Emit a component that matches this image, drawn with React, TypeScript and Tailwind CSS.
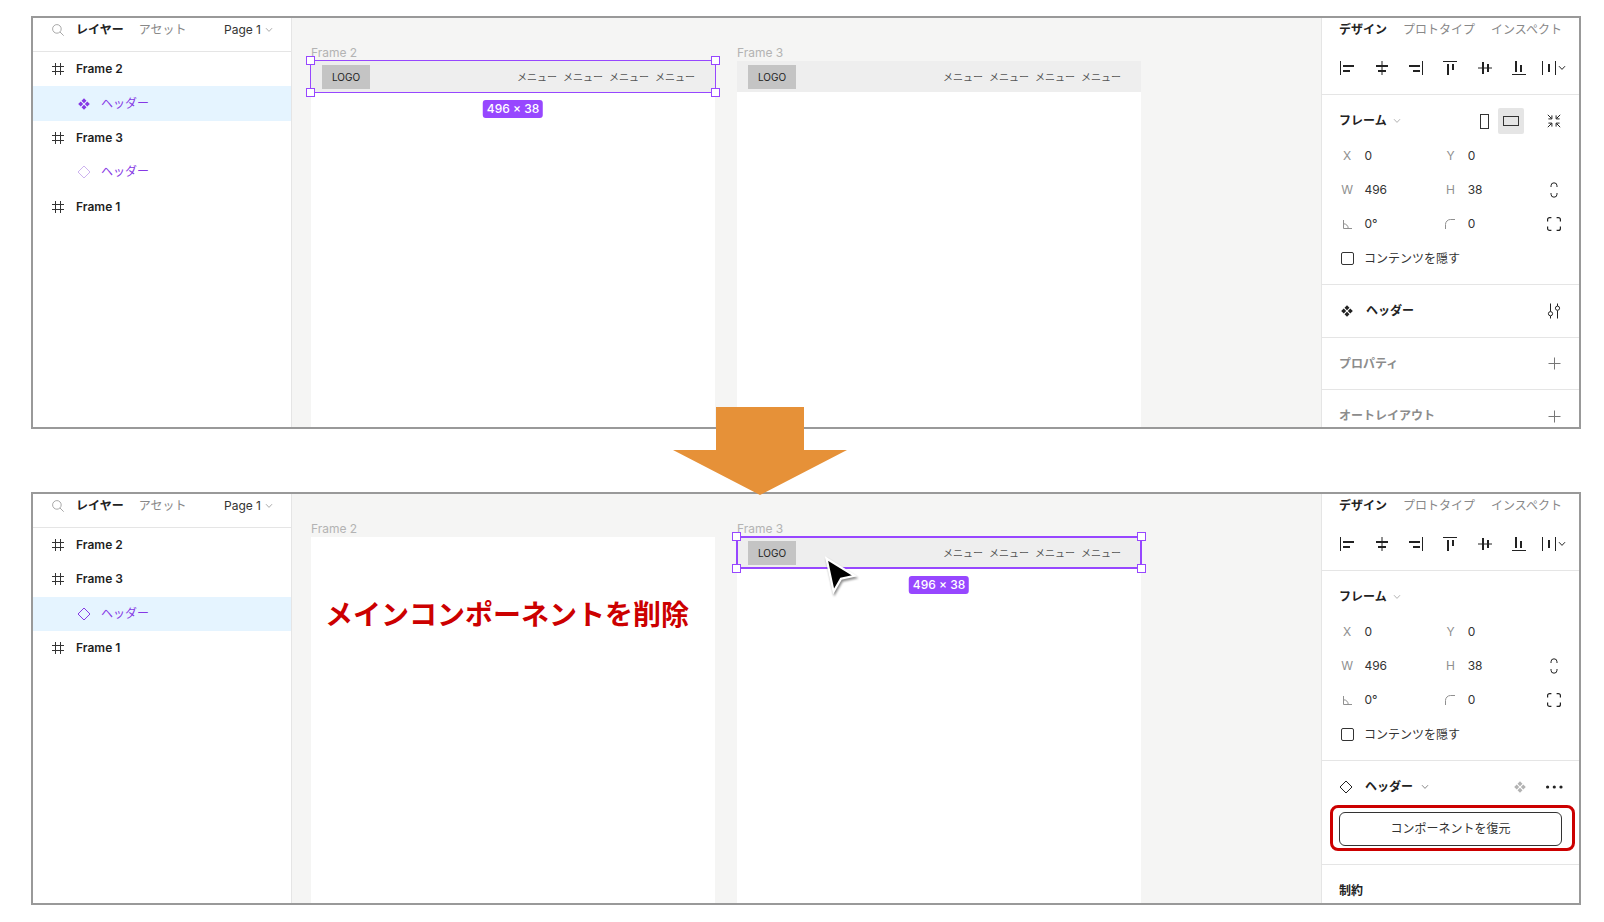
import { useId, type ReactNode } from "react";

const RULE = "border-[#e5e5e5]";

/* ---------- icons ---------- */

function Svg({ w, h, className = "", children }: { w: number; h: number; className?: string; children: ReactNode }) {
  return (
    <svg width={w} height={h} viewBox={`0 0 ${w} ${h}`} fill="none" stroke="currentColor" className={`shrink-0 ${className}`} aria-hidden="true">
      {children}
    </svg>
  );
}

const SearchIcon = () => (
  <Svg w={12} h={12} className="text-[#a8a8a8]">
    <circle cx="4.9" cy="4.9" r="4.3" />
    <path d="M8 8 11.7 11.7" />
  </Svg>
);

const Chevron = ({ className = "" }: { className?: string }) => (
  <Svg w={8} h={6} className={className}>
    <path d="M1 1.2 4 4.4 7 1.2" />
  </Svg>
);

const FrameIcon = () => (
  <Svg w={12} h={12} className="text-[#333]">
    <path d="M3.5 0V12M8.5 0V12M0 3.5H12M0 8.5H12" />
  </Svg>
);

const ComponentIcon = ({ className = "" }: { className?: string }) => (
  <Svg w={12} h={12} className={className}>
    <path fill="currentColor" stroke="none" d="M6 .2 8.5 2.7 6 5.2 3.5 2.7ZM6 6.8 8.5 9.3 6 11.8 3.5 9.3ZM2.7 3.5 5.2 6 2.7 8.5.2 6ZM9.3 3.5 11.8 6 9.3 8.5 6.8 6Z" />
  </Svg>
);

const DiamondIcon = ({ className = "" }: { className?: string }) => (
  <Svg w={14} h={14} className={className}>
    <path d="M7 1 13 7 7 13 1 7Z" />
  </Svg>
);

const PlusIcon = () => (
  <Svg w={13} h={13} className="text-[#777]">
    <path d="M6.5 .5V12.5M.5 6.5H12.5" />
  </Svg>
);

const SlidersIcon = () => (
  <Svg w={14} h={16} className="text-[#222]">
    <path d="M3.5 .5V8.5M3.5 13V15.5M10.5 .5V3M10.5 7.5V15.5" />
    <circle cx="3.5" cy="10.7" r="2.1" />
    <circle cx="10.5" cy="5.2" r="2.1" />
  </Svg>
);

const DotsIcon = () => (
  <Svg w={18} h={4} className="text-[#222]">
    <g fill="currentColor" stroke="none">
      <circle cx="2.6" cy="2" r="1.6" />
      <circle cx="9.3" cy="2" r="1.6" />
      <circle cx="16" cy="2" r="1.6" />
    </g>
  </Svg>
);

const alignIcons: { name: string; icon: ReactNode }[] = [
  { name: "左揃え", icon: <Svg w={14} h={14}><path d="M.5 0V14" /><path strokeWidth="2" d="M3 5H14M3 10H10" /></Svg> },
  { name: "水平方向の中央揃え", icon: <Svg w={14} h={14}><path d="M7 0V14" /><path strokeWidth="2" d="M1 5H13M3 10H11" /></Svg> },
  { name: "右揃え", icon: <Svg w={14} h={14}><path d="M13.5 0V14" /><path strokeWidth="2" d="M0 5H11M4 10H11" /></Svg> },
  { name: "上揃え", icon: <Svg w={14} h={14}><path d="M0 .5H14" /><path strokeWidth="2" d="M5 3V14M10 3V9" /></Svg> },
  { name: "垂直方向の中央揃え", icon: <Svg w={14} h={14}><path d="M0 7H14" /><path strokeWidth="2" d="M5 1V13M10 3V11" /></Svg> },
  { name: "下揃え", icon: <Svg w={14} h={14}><path d="M0 13.5H14" /><path strokeWidth="2" d="M4 0V11M9 4V11" /></Svg> },
  { name: "均等配置", icon: <Svg w={24} h={14}><path d="M.5 0V14M13.5 0V14M17 5.2 20 8.4 23 5.2" /><path strokeWidth="2" d="M7 3V11" /></Svg> },
];

const CollapseIcon = () => (
  <Svg w={14} h={14} className="text-[#222]">
    <path d="M.8 .8 4.6 4.6M1.4 4.9H4.9V1.4M13.2 .8 9.4 4.6M12.6 4.9H9.1V1.4M.8 13.2 4.6 9.4M1.4 9.1H4.9V12.6M13.2 13.2 9.4 9.4M12.6 9.1H9.1V12.6" />
  </Svg>
);

const LinkIcon = () => (
  <Svg w={8} h={16} className="text-[#222]">
    <path d="M1 5V3.8A3 3 0 0 1 7 3.8V5M1 11V12.2A3 3 0 0 0 7 12.2V11" />
  </Svg>
);

const CornersIcon = () => (
  <Svg w={14} h={14} className="text-[#222]">
    <path strokeWidth="1.2" d="M.6 4.4V2.6A2 2 0 0 1 2.6.6H4.4M9.6.6H11.4A2 2 0 0 1 13.4 2.6V4.4M13.4 9.6V11.4A2 2 0 0 1 11.4 13.4H9.6M4.4 13.4H2.6A2 2 0 0 1 .6 11.4V9.6" />
  </Svg>
);

const AngleIcon = () => (
  <Svg w={9} h={9}>
    <path d="M.5 0V8.5H9M.5 3.8A4.5 4.5 0 0 1 5.2 8.5" />
  </Svg>
);

const RadiusIcon = () => (
  <Svg w={10} h={10}>
    <path d="M.5 10V5.5A5 5 0 0 1 5.5 .5H10" />
  </Svg>
);

/* ---------- layers sidebar ---------- */

type Layer = { name: string; kind: "frame" | "main" | "instance"; selected?: boolean };

function LayerRow({ layer }: { layer: Layer }) {
  if (layer.kind === "frame") {
    return (
      <button className="flex w-full items-center gap-3 pl-[19px] text-left font-semibold text-[#1f1f1f]">
        <FrameIcon />
        {layer.name}
      </button>
    );
  }
  return (
    <button className={`flex w-full items-center gap-[10px] pl-11 text-left text-[#8638e5] ${layer.selected ? "bg-[#e5f4ff]" : ""}`}>
      <span className="flex w-[14px] justify-center">
        {layer.kind === "main" ? <ComponentIcon /> : <DiamondIcon className={layer.selected ? "" : "text-[#cdb3ef]"} />}
      </span>
      {layer.name}
    </button>
  );
}

function Layers({ layers }: { layers: Layer[] }) {
  return (
    <aside className={`w-[259px] shrink-0 border-r bg-white ${RULE}`}>
      <div className={`border-b pb-[9px] ${RULE}`}>
        <div className="flex h-6 items-center pr-[18px] pl-[19px]">
          <SearchIcon />
          <button className="ml-3 font-bold text-[#222]">レイヤー</button>
          <button className="ml-[15px] text-[#888]">アセット</button>
          <button className="ml-auto flex items-center gap-1 text-[#333]">
            Page 1
            <Chevron className="text-[#aaa]" />
          </button>
        </div>
      </div>
      <div className={layers.length === 5 ? "grid h-[172px] grid-rows-5" : "grid h-[137px] grid-rows-4"}>
        {layers.map((layer, i) => (
          <LayerRow key={i} layer={layer} />
        ))}
      </div>
    </aside>
  );
}

/* ---------- canvas ---------- */

const handle = "absolute size-[9px] border border-[#9747ff] bg-white";

function SiteHeader({ outline }: { outline?: "thin" | "thick" }) {
  return (
    <div className="relative flex h-[31px] items-center bg-[#eee] pr-5 pl-[11px] text-[10px]">
      <span className="flex h-6 w-12 items-center justify-center bg-[#c4c4c4] text-[#222]">LOGO</span>
      <span className="ml-auto flex gap-[6px] text-[#555]">
        <span>メニュー</span>
        <span>メニュー</span>
        <span>メニュー</span>
        <span>メニュー</span>
      </span>
      {outline && (
        <>
          <span className={outline === "thick" ? "absolute -inset-px border-2 border-[#9747ff]" : "absolute -inset-px border border-[#9747ff]"} />
          <span className={`${handle} -top-[5px] -left-[5px]`} />
          <span className={`${handle} -top-[5px] -right-[5px]`} />
          <span className={`${handle} -bottom-[5px] -left-[5px]`} />
          <span className={`${handle} -right-[5px] -bottom-[5px]`} />
          <span className="absolute top-[39px] left-1/2 flex h-[18px] -translate-x-1/2 items-center rounded-[3px] bg-[#9747ff] px-1 text-xs font-medium whitespace-nowrap text-white">
            496 × 38
          </span>
        </>
      )}
    </div>
  );
}

function Artboard({ name, children }: { name: string; children: ReactNode }) {
  return (
    <section className="flex w-[404px] shrink-0 flex-col">
      <h2 className="h-4 leading-4 text-[#b3b3b3]">{name}</h2>
      <div className="flex-1 bg-white">{children}</div>
    </section>
  );
}

function Canvas({ children }: { children: ReactNode }) {
  return <main className="flex min-w-0 flex-1 gap-[22px] overflow-hidden bg-[#f5f5f4] pt-[27px] pl-[19px]">{children}</main>;
}

const Cursor = () => (
  <svg width="40" height="46" viewBox="0 0 40 46" className="absolute top-[17px] left-[84px] drop-shadow-[1px_2px_1px_rgba(0,0,0,0.45)]" aria-hidden="true">
    <path d="M5.5 4.5 33.5 21.8 20 24.8 12.6 37.6Z" fill="#000" stroke="#fff" strokeWidth="2.2" />
  </svg>
);

/* ---------- properties sidebar ---------- */

function Field({ label, value, children, wide }: { label: string; value: string; children: ReactNode; wide?: boolean }) {
  const id = useId();
  return (
    <>
      <label htmlFor={id} aria-label={label} className="flex items-center justify-center text-[#909090]">
        {children}
      </label>
      <span className="col-span-2 flex items-center">
        <input id={id} defaultValue={value} className="w-full bg-transparent text-[#333] outline-none" />
      </span>
      {wide && <span />}
    </>
  );
}

function RightIcon({ name, children }: { name: string; children: ReactNode }) {
  return (
    <button aria-label={name} className="flex w-[34px] shrink-0 items-center justify-center">
      {children}
    </button>
  );
}

function Inspector({ orientation, children }: { orientation?: boolean; children: ReactNode }) {
  const clipId = useId();
  return (
    <aside className={`w-[258px] shrink-0 border-l bg-white ${RULE}`}>
      <div className={`border-b pb-[18px] ${RULE}`}>
        <div className="flex h-6 items-center gap-4 pl-[17px] text-[#888]">
          <button className="font-bold text-[#222]">デザイン</button>
          <button>プロトタイプ</button>
          <button>インスペクト</button>
        </div>
        <div className="mt-[18px] grid h-4 grid-cols-7 px-2 text-[#222]">
          {alignIcons.map(({ name, icon }) => (
            <button key={name} aria-label={name} className="flex items-center justify-center">
              {icon}
            </button>
          ))}
        </div>
      </div>

      <div className={`border-b px-2 pt-[9px] pb-2 ${RULE}`}>
        <div className="grid h-[172px] grid-cols-7 grid-rows-5">
          <div className="col-span-7 flex items-center pl-[9px]">
            <button className="flex items-center gap-1.5 font-bold text-[#222]">
              フレーム
              <Chevron className="text-[#b3b3b3]" />
            </button>
            <span className="ml-auto flex">
              {orientation && (
                <span className="mr-[13px] flex text-[#333]">
                  <button aria-label="縦向き" className="flex size-[26px] items-center justify-center">
                    <Svg w={9} h={15}><rect x=".5" y=".5" width="8" height="14" /></Svg>
                  </button>
                  <button aria-label="横向き" className="flex size-[26px] items-center justify-center rounded-xs bg-[#e5e5e5]">
                    <Svg w={16} h={10}><rect x=".5" y=".5" width="15" height="9" /></Svg>
                  </button>
                </span>
              )}
              {orientation && <RightIcon name="サイズを自動調整"><CollapseIcon /></RightIcon>}
            </span>
          </div>

          <Field label="X" value="0">X</Field>
          <Field label="Y" value="0" wide>Y</Field>

          <Field label="W" value="496">W</Field>
          <Field label="H" value="38">H</Field>
          <RightIcon name="縦横比を固定"><LinkIcon /></RightIcon>

          <Field label="回転" value="0°"><AngleIcon /></Field>
          <Field label="角の半径" value="0"><RadiusIcon /></Field>
          <RightIcon name="個別の角"><CornersIcon /></RightIcon>

          <div className="col-span-7 flex items-center pl-[11px] text-[#333]">
            <input id={clipId} type="checkbox" className="size-[13px] appearance-none rounded-xs border border-[#333] bg-white" />
            <label htmlFor={clipId} className="pl-[10px]">コンテンツを隠す</label>
          </div>
        </div>
      </div>
      {children}
    </aside>
  );
}

/* ---------- page ---------- */

const panel = "flex overflow-hidden border-2 border-[#999]";

export default function App() {
  return (
    <div className="bg-white pt-4 pr-[23px] pl-[31px] font-['Inter','Noto_Sans_CJK_JP',sans-serif] text-xs leading-5">
      <div className={panel}>
        <Layers
          layers={[
            { name: "Frame 2", kind: "frame" },
            { name: "ヘッダー", kind: "main", selected: true },
            { name: "Frame 3", kind: "frame" },
            { name: "ヘッダー", kind: "instance" },
            { name: "Frame 1", kind: "frame" },
          ]}
        />
        <Canvas>
          <Artboard name="Frame 2">
            <SiteHeader outline="thin" />
          </Artboard>
          <Artboard name="Frame 3">
            <SiteHeader />
          </Artboard>
        </Canvas>
        <Inspector orientation>
          <div className={`box-content flex h-[52px] items-center border-b pl-2 pr-2 ${RULE}`}>
            <ComponentIcon className="ml-[11px] text-[#222]" />
            <span className="pl-[13px] font-bold text-[#222]">ヘッダー</span>
            <span className="ml-auto flex"><RightIcon name="設定"><SlidersIcon /></RightIcon></span>
          </div>
          <div className={`box-content flex h-[51px] items-center border-b px-2 ${RULE}`}>
            <span className="pl-[9px] font-bold text-[#8c8c8c]">プロパティ</span>
            <span className="ml-auto flex"><RightIcon name="プロパティを追加"><PlusIcon /></RightIcon></span>
          </div>
          <div className="flex items-center px-2 pt-4 pb-px">
            <span className="pl-[9px] font-bold text-[#8c8c8c]">オートレイアウト</span>
            <span className="ml-auto flex"><RightIcon name="オートレイアウトを追加"><PlusIcon /></RightIcon></span>
          </div>
        </Inspector>
      </div>

      <div className="relative h-[63px]">
        <svg width="176" height="88" viewBox="0 0 176 88" className="absolute -top-[22px] left-[641px] z-10" aria-hidden="true">
          <path d="M44 0H132V43H175L88 88 1 43H44Z" fill="#e69138" />
        </svg>
      </div>

      <div className={panel}>
        <Layers
          layers={[
            { name: "Frame 2", kind: "frame" },
            { name: "Frame 3", kind: "frame" },
            { name: "ヘッダー", kind: "instance", selected: true },
            { name: "Frame 1", kind: "frame" },
          ]}
        />
        <Canvas>
          <Artboard name="Frame 2">
            <p className="pt-[60px] pr-3 text-center text-[28px] leading-9 font-bold whitespace-nowrap text-[#cc0000]">メインコンポーネントを削除</p>
          </Artboard>
          <Artboard name="Frame 3">
            <div className="relative">
              <SiteHeader outline="thick" />
              <Cursor />
            </div>
          </Artboard>
        </Canvas>
        <Inspector>
          <div className={`border-b pb-[18px] ${RULE}`}>
            <div className="flex h-[51px] items-center px-2">
              <DiamondIcon className="ml-[9px] text-[#222]" />
              <button className="flex items-center gap-2 pl-3 font-bold text-[#222]">
                ヘッダー
                <Chevron className="text-[#888]" />
              </button>
              <span className="ml-auto flex">
                <RightIcon name="メインコンポーネント"><ComponentIcon className="text-[#b3b3b3]" /></RightIcon>
                <RightIcon name="その他"><DotsIcon /></RightIcon>
              </span>
            </div>
            <div className="relative px-[17px]">
              <button className="block h-[34px] w-full rounded-md border border-[#333] bg-white text-[#333]">コンポーネントを復元</button>
              <span className="pointer-events-none absolute -top-[7px] right-1 -bottom-[5px] left-2 rounded-lg border-3 border-[#cc0000]" />
            </div>
          </div>
          <div className="px-2 pt-4 pb-0.5">
            <h3 className="pl-[9px] font-bold text-[#222]">制約</h3>
          </div>
        </Inspector>
      </div>
    </div>
  );
}
